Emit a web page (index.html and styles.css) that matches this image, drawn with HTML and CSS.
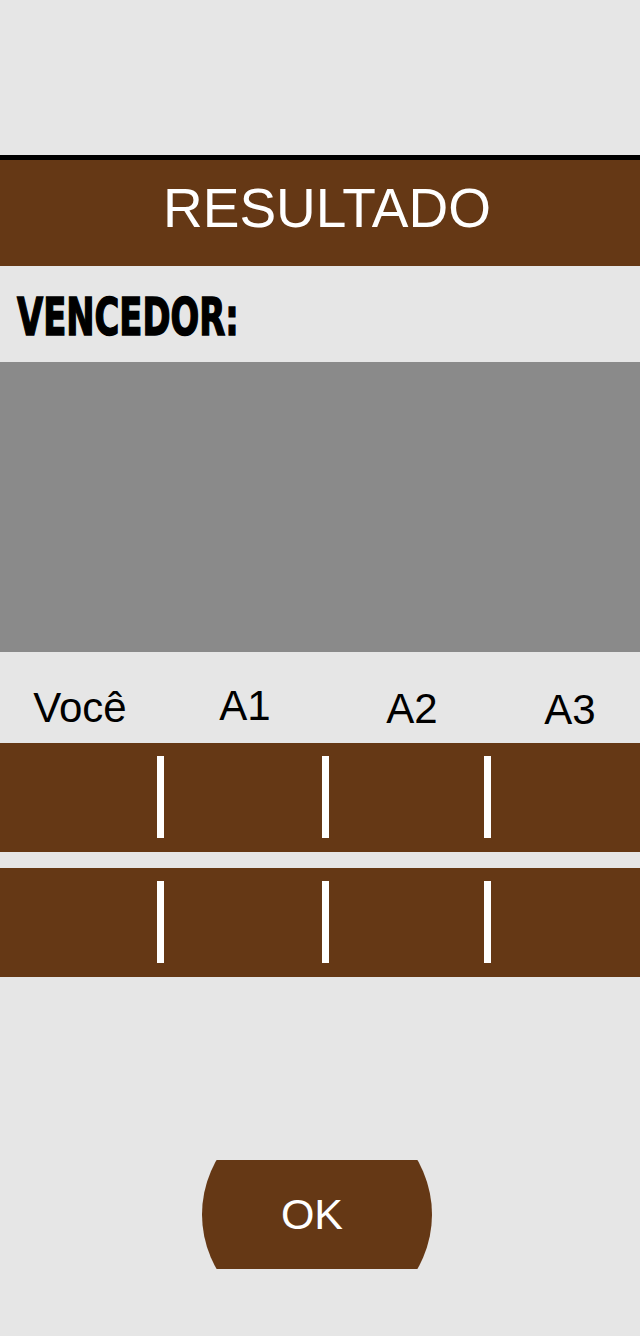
FILE: index.html
```html
<!DOCTYPE html>
<html>
<head>
    <title>Resultado</title>
    <link rel="stylesheet" href="styles.css">
</head>
<body>

<div class="screen">
    <h1 class="title">RESULTADO</h1>

    <div class="winner">
        <span class="winner-label">VENCEDOR:</span>
    </div>

    <div class="winner-box"></div>

    <!-- Player columns -->
    <div class="players">
        <span class="player">Você</span>
        <span class="player player-a1">A1</span>
        <span class="player player-a2">A2</span>
        <span class="player player-a3">A3</span>
    </div>

    <div class="score-row">
        <div class="cell"></div>
        <div class="divider"></div>
        <div class="cell"></div>
        <div class="divider"></div>
        <div class="cell"></div>
        <div class="divider"></div>
        <div class="cell"></div>
    </div>

    <div class="score-row">
        <div class="cell"></div>
        <div class="divider"></div>
        <div class="cell"></div>
        <div class="divider"></div>
        <div class="cell"></div>
        <div class="divider"></div>
        <div class="cell"></div>
    </div>

    <button class="ok-button">OK</button>
</div>

</body>
</html>
```

FILE: styles.css
```css
body {
    margin: 0;
    padding: 0;
    background: #e6e6e6;
    font-family: 'Liberation Sans', Arial, sans-serif;
}

.screen {
    width: 640px;
    min-height: 1336px;
    padding-top: 155px;
    box-sizing: border-box;
}

/* Header bar */
.title {
    margin: 0;
    height: 106px;
    border-top: 5px solid #000;
    background: #653815;
    color: #fff;
    font-size: 55px;
    font-weight: normal;
    line-height: 96px;
    text-align: center;
    padding-left: 14px;
    box-sizing: content-box;
}

/* Winner label */
.winner {
    height: 52px;
    padding: 25px 0 19px 17px;
}

.winner-label {
    display: inline-block;
    font-family: 'DejaVu Sans', sans-serif;
    font-weight: bold;
    font-size: 52px;
    line-height: 52px;
    color: #000;
    -webkit-text-stroke: 1.6px #000;
    transform: scaleX(0.65);
    transform-origin: left center;
    white-space: nowrap;
}

.winner-box {
    height: 290px;
    background: #8a8a8a;
}

/* Player names */
.players {
    display: grid;
    grid-template-columns: 160px 170px 164px 1fr;
    height: 42px;
    padding: 35px 0 14px;
}

.player {
    text-align: center;
    font-size: 42px;
    line-height: 42px;
    color: #000;
}

.player-a1 {
    position: relative;
    top: -2px;
}

.player-a2 {
    position: relative;
    top: 1px;
}

.player-a3 {
    position: relative;
    top: 2px;
    padding-left: 6px;
}

/* Score bars */
.score-row {
    display: grid;
    grid-template-columns: 157px 7px 158px 7px 155px 7px 1fr;
    height: 109px;
    padding: 13px 0 14px;
    box-sizing: border-box;
    background: #653815;
    margin-bottom: 16px;
}

.divider {
    background: #fff;
}

/* OK button */
.ok-button {
    display: block;
    width: 230px;
    height: 109px;
    margin: 183px 0 0 202px;
    padding: 0 10px 0 0;
    border: none;
    background: #653815;
    clip-path: ellipse(115px 112px at 50% 50%);
    color: #fff;
    font-family: 'Liberation Sans', Arial, sans-serif;
    font-size: 43px;
    line-height: 109px;
    cursor: pointer;
}
```
